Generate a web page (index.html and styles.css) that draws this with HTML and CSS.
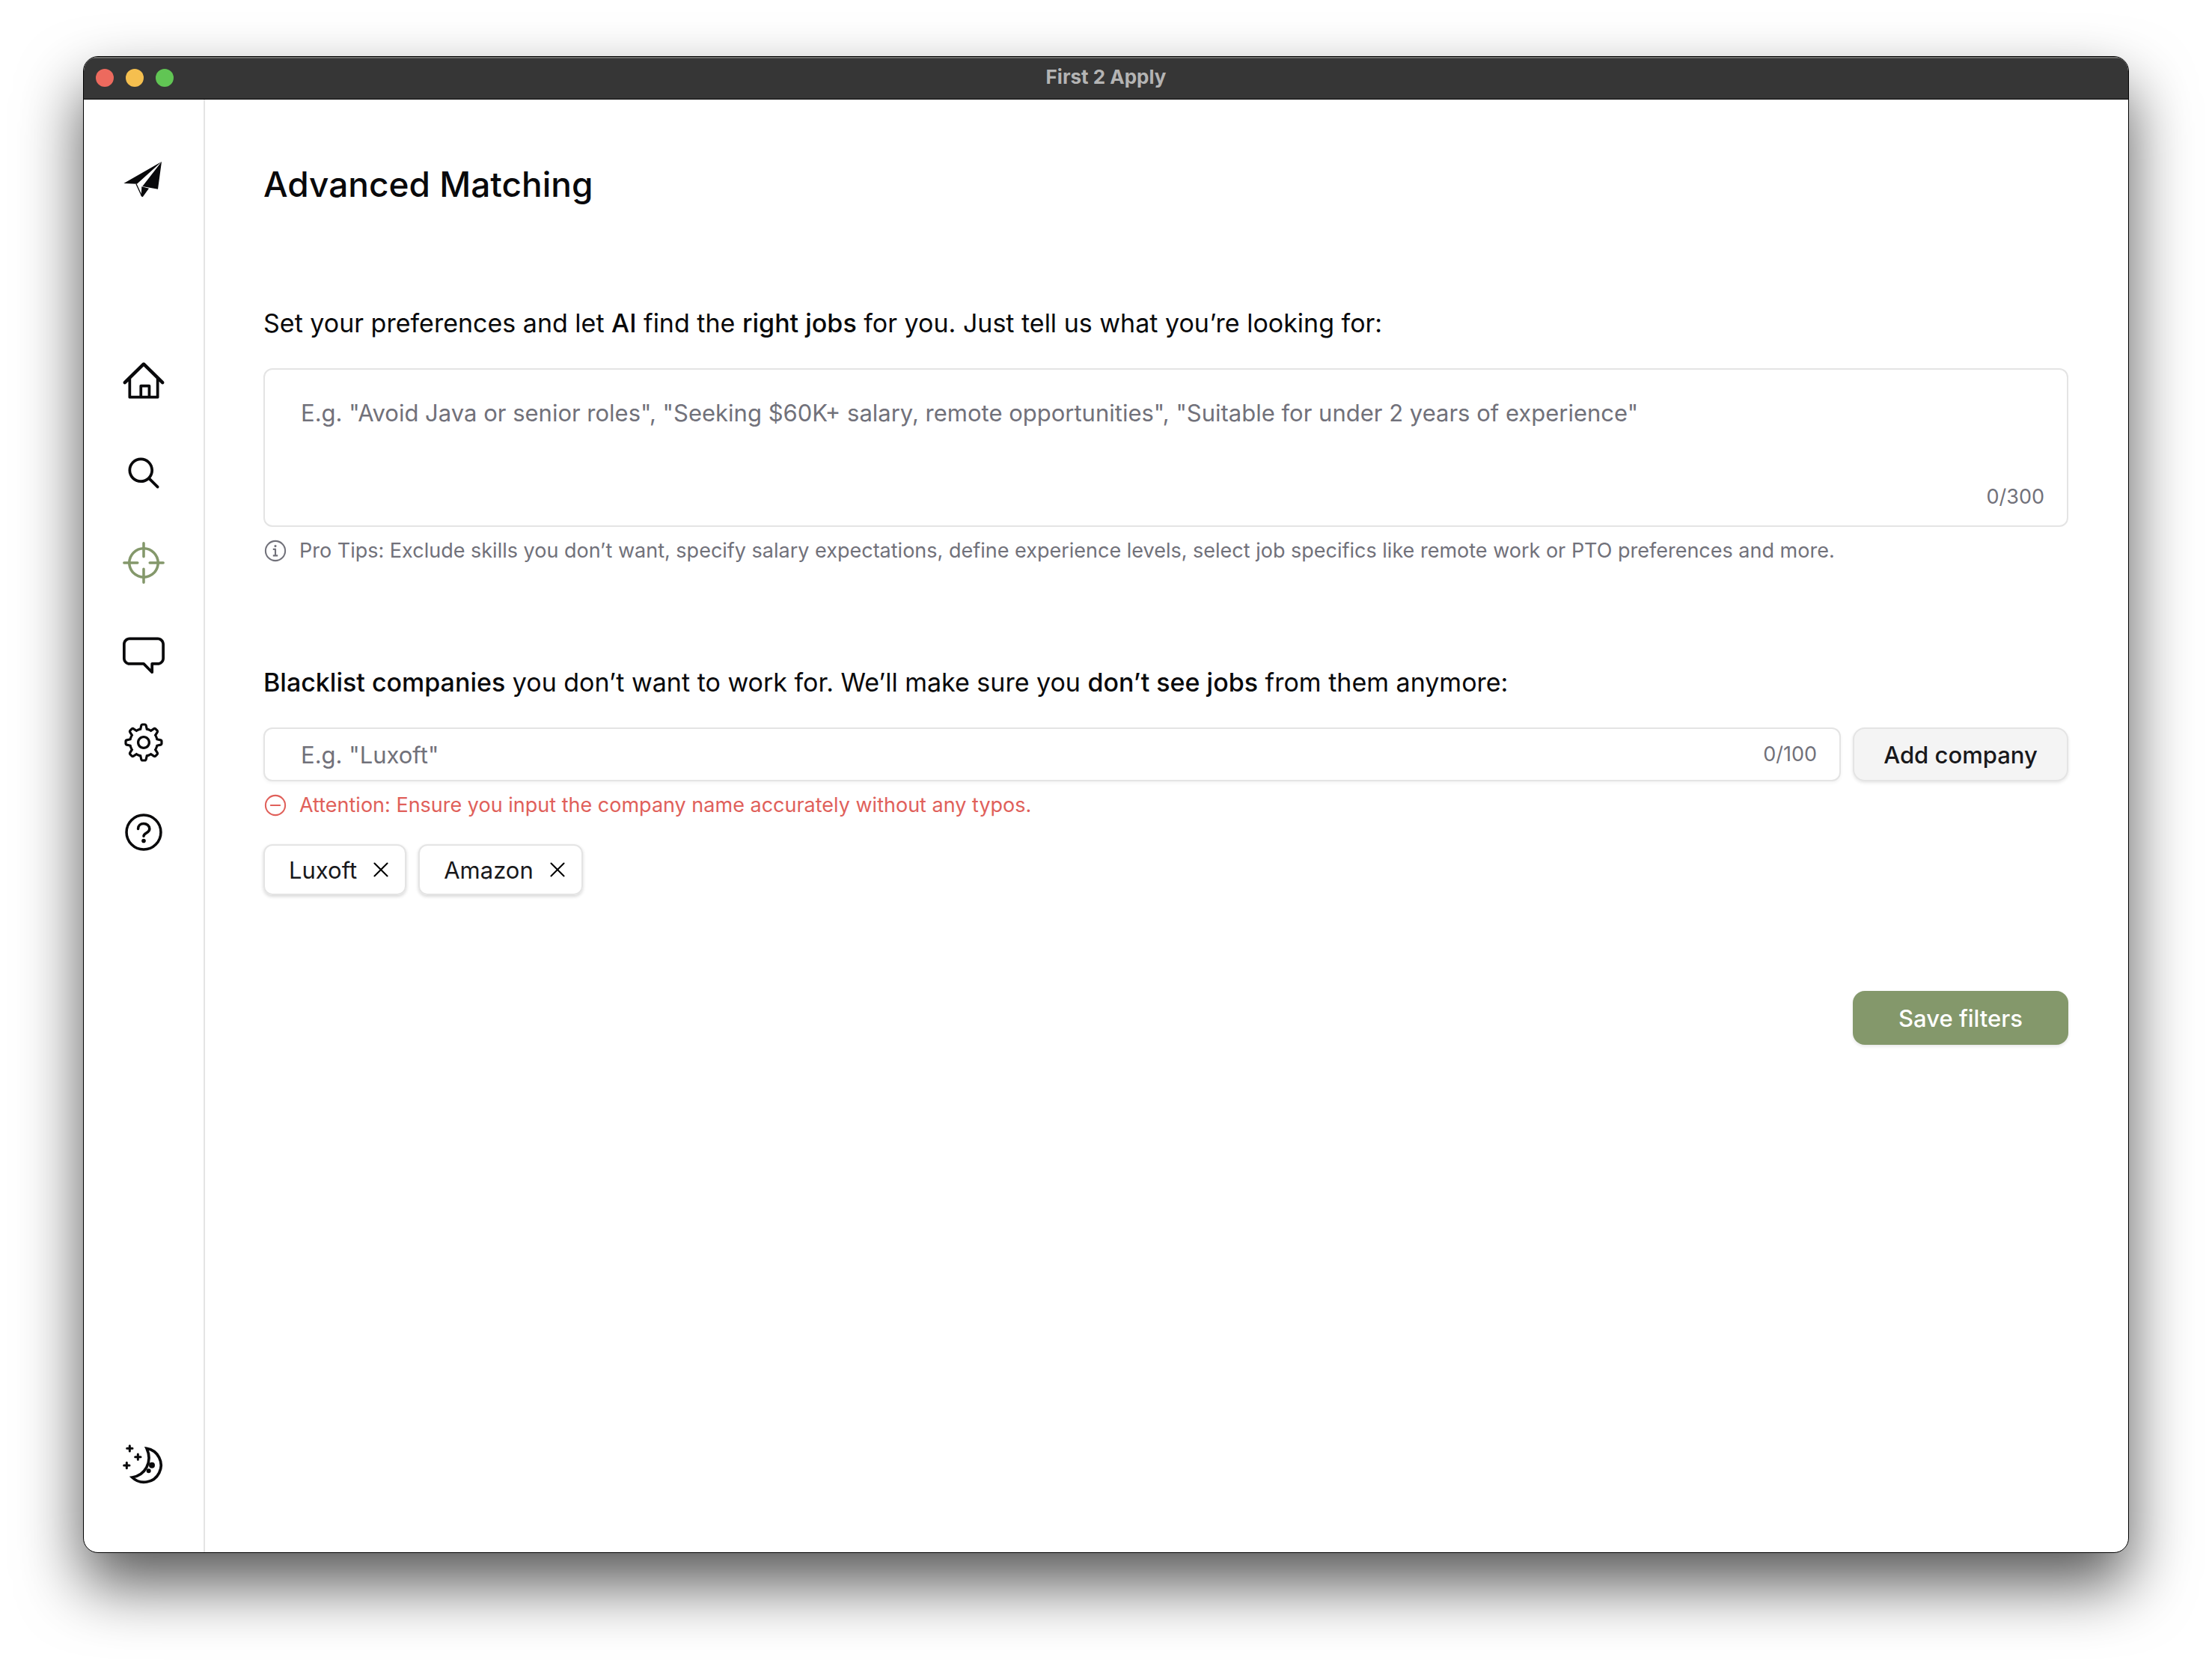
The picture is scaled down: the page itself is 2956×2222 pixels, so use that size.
FILE: index.html
```html
<!DOCTYPE html>
<html lang="en">
<head>
<meta charset="utf-8">
<meta name="viewport" content="width=device-width, initial-scale=1">
<title>First 2 Apply</title>
<link rel="stylesheet" href="styles.css">
</head>
<body>
<div class="window">
  <header class="titlebar">
    <div class="lights">
      <span class="light light-close"></span>
      <span class="light light-minimize"></span>
      <span class="light light-zoom"></span>
    </div>
    <span class="titlebar-text">First 2 Apply</span>
  </header>
  <div class="body">
    <aside class="sidebar">
      <a class="nav-link" href="#" aria-label="First 2 Apply">
        <svg class="icon" viewBox="0 0 168 168">
          <path d="M4 99 156 12 57 101Z M156 12 141 122 79 111Z M76 112 105 119 80 154 74 150Z"/>
          <path d="M54 101 77 151" fill="none" stroke="currentColor" stroke-width="4"/>
        </svg>
      </a>
      <nav class="nav">
        <a class="nav-link" href="#" aria-label="Home">
          <svg class="icon" viewBox="0 0 15 15"><path fill-rule="evenodd" d="M7.07926 0.222253C7.31275 -0.007434 7.6873 -0.007434 7.92079 0.222253L14.6708 6.86227C14.907 7.09465 14.9101 7.47453 14.6778 7.71076C14.4454 7.947 14.0655 7.95012 13.8293 7.71773L13 6.90201V12.5C13 12.7761 12.7762 13 12.5 13H2.50002C2.22388 13 2.00002 12.7761 2.00002 12.5V6.90201L1.17079 7.71773C0.934558 7.95012 0.554672 7.947 0.32229 7.71076C0.0899079 7.47453 0.0930283 7.09465 0.32926 6.86227L7.07926 0.222253ZM7.50002 1.49163L12 5.91831V12H10V8.49999C10 8.22385 9.77617 7.99999 9.50002 7.99999H6.50002C6.22388 7.99999 6.00002 8.22385 6.00002 8.49999V12H3.00002V5.91831L7.50002 1.49163ZM7 12H9V8.99999H7V12Z"/></svg>
        </a>
        <a class="nav-link" href="#" aria-label="Search">
          <svg class="icon" viewBox="0 0 15 15"><path fill-rule="evenodd" d="M10 6.5C10 8.433 8.433 10 6.5 10C4.567 10 3 8.433 3 6.5C3 4.567 4.567 3 6.5 3C8.433 3 10 4.567 10 6.5ZM9.30884 10.0159C8.53901 10.6318 7.56251 11 6.5 11C4.01472 11 2 8.98528 2 6.5C2 4.01472 4.01472 2 6.5 2C8.98528 2 11 4.01472 11 6.5C11 7.56251 10.6318 8.53901 10.0159 9.30884L12.8536 12.1464C13.0488 12.3417 13.0488 12.6583 12.8536 12.8536C12.6583 13.0488 12.3417 13.0488 12.1464 12.8536L9.30884 10.0159Z"/></svg>
        </a>
        <a class="nav-link nav-link-active" href="#" aria-label="Advanced matching" aria-current="page">
          <svg class="icon icon-line" viewBox="0 0 15 15"><circle cx="7.5" cy="7.5" r="5.15"/><path d="M7.5 .5V5.3M7.5 9.7V14.5M.5 7.5H5.3M9.7 7.5H14.5"/></svg>
        </a>
        <a class="nav-link" href="#" aria-label="Feedback">
          <svg class="icon" viewBox="0 0 15 15"><path fill-rule="evenodd" d="M12.5 3L2.5 3.00002C1.67157 3.00002 1 3.6716 1 4.50002V9.50003C1 10.3285 1.67157 11 2.5 11H7.50003C7.63264 11 7.75982 11.0527 7.85358 11.1465L10 13.2929V11.5C10 11.2239 10.2239 11 10.5 11H12.5C13.3284 11 14 10.3285 14 9.50003V4.5C14 3.67157 13.3284 3 12.5 3ZM2.49999 2.00002L12.5 2C13.8807 2 15 3.11929 15 4.5V9.50003C15 10.8807 13.8807 12 12.5 12H11V14.5C11 14.7022 10.8782 14.8845 10.6913 14.9619C10.5045 15.0393 10.2894 14.9965 10.1464 14.8536L7.29292 12H2.5C1.11929 12 0 10.8807 0 9.50003V4.50002C0 3.11931 1.11928 2.00003 2.49999 2.00002Z"/></svg>
        </a>
        <a class="nav-link" href="#" aria-label="Settings">
          <svg class="icon" viewBox="0 0 15 15"><path fill-rule="evenodd" d="M7.07095 0.650238C6.67391 0.650238 6.32977 0.925096 6.24198 1.31231L6.0039 2.36247C5.6249 2.47269 5.26335 2.62363 4.92436 2.81013L4.01335 2.23585C3.67748 2.02413 3.23978 2.07312 2.95903 2.35386L2.35294 2.95996C2.0722 3.2407 2.0232 3.6784 2.23493 4.01427L2.80942 4.92561C2.62307 5.2645 2.47227 5.62594 2.36216 6.00481L1.31209 6.24287C0.924883 6.33065 0.650024 6.6748 0.650024 7.07183V7.92897C0.650024 8.32601 0.924883 8.67015 1.31209 8.75794L2.36228 8.99603C2.47246 9.375 2.62335 9.73652 2.80979 10.0755L2.2354 10.9867C2.02367 11.3225 2.07267 11.7602 2.35341 12.041L2.95951 12.6471C3.24025 12.9278 3.67795 12.9768 4.01382 12.7651L4.92506 12.1907C5.26384 12.377 5.62516 12.5278 6.0039 12.6379L6.24198 13.6881C6.32977 14.0753 6.67391 14.3502 7.07095 14.3502H7.92809C8.32512 14.3502 8.66927 14.0753 8.75705 13.6881L8.99505 12.6383C9.37411 12.5282 9.73573 12.3773 10.0748 12.1909L10.986 12.7653C11.3218 12.977 11.7595 12.928 12.0403 12.6473L12.6464 12.0412C12.9271 11.7604 12.9761 11.3227 12.7644 10.9869L12.1902 10.076C12.3768 9.73688 12.5278 9.37515 12.638 8.99596L13.6879 8.75794C14.0751 8.67015 14.35 8.32601 14.35 7.92897V7.07183C14.35 6.6748 14.0751 6.33065 13.6879 6.24287L12.6381 6.00488C12.528 5.62578 12.3771 5.26414 12.1906 4.92507L12.7648 4.01407C12.9766 3.6782 12.9276 3.2405 12.6468 2.95975L12.0407 2.35366C11.76 2.07292 11.3223 2.02392 10.9864 2.23565L10.0755 2.80989C9.73622 2.62328 9.37437 2.47229 8.99505 2.36209L8.75705 1.31231C8.66927 0.925096 8.32512 0.650238 7.92809 0.650238H7.07095ZM4.92053 3.81251C5.44724 3.44339 6.05665 3.18424 6.71543 3.06839L7.07095 1.50024H7.92809L8.28355 3.06816C8.94267 3.18387 9.5524 3.44302 10.0794 3.81224L11.4397 2.9547L12.0458 3.56079L11.1882 4.92117C11.5573 5.44798 11.8164 6.0575 11.9321 6.71638L13.5 7.07183V7.92897L11.932 8.28444C11.8162 8.94342 11.557 9.55301 11.1878 10.0798L12.0453 11.4402L11.4392 12.0462L10.0787 11.1886C9.55192 11.5576 8.94241 11.8166 8.28355 11.9323L7.92809 13.5002H7.07095L6.71543 11.932C6.0569 11.8162 5.44772 11.5572 4.92116 11.1883L3.56055 12.046L2.95445 11.4399L3.81213 10.0794C3.4431 9.55266 3.18403 8.94326 3.06825 8.2845L1.50002 7.92897V7.07183L3.06818 6.71632C3.18388 6.05765 3.44283 5.44833 3.81171 4.92165L2.95398 3.561L3.56008 2.95491L4.92053 3.81251ZM9.02496 7.50008C9.02496 8.34226 8.34223 9.02499 7.50005 9.02499C6.65786 9.02499 5.97513 8.34226 5.97513 7.50008C5.97513 6.65789 6.65786 5.97516 7.50005 5.97516C8.34223 5.97516 9.02496 6.65789 9.02496 7.50008ZM9.92496 7.50008C9.92496 8.83932 8.83929 9.92499 7.50005 9.92499C6.1608 9.92499 5.07513 8.83932 5.07513 7.50008C5.07513 6.16084 6.1608 5.07516 7.50005 5.07516C8.83929 5.07516 9.92496 6.16084 9.92496 7.50008Z"/></svg>
        </a>
        <a class="nav-link" href="#" aria-label="Help">
          <svg class="icon icon-line" viewBox="0 0 15 15"><circle cx="7.5" cy="7.5" r="6.15"/><path d="M5.5 6.3C5.5 5.1 6.4 4.4 7.5 4.4S9.6 5.2 9.6 6.3C9.6 7.8 7.5 7.7 7.5 8.9"/><circle class="dot" cx="7.5" cy="10.6" r=".75"/></svg>
        </a>
      </nav>
      <button class="nav-link theme-toggle" type="button" aria-label="Switch theme">
        <svg class="icon" viewBox="0 0 168 168">
          <g fill="none" stroke="currentColor" stroke-width="11">
            <path d="M96 22A68 68 0 1 1 38 138C88 130 122 78 96 22Z"/>
            <path stroke-linecap="round" stroke-width="9" d="M28 11V33M17 22H39M61 45V67M50 56H72M16 79V101M5 90H27"/>
          </g>
          <circle cx="117" cy="89" r="12"/>
          <circle cx="104" cy="112" r="9"/>
        </svg>
      </button>
    </aside>
    <main class="main">
      <h1 class="title">Advanced Matching</h1>

      <section class="section">
        <label class="prompt" for="preferences">Set your preferences and let <strong>AI</strong> find the <strong>right jobs</strong> for you. Just tell us what you’re looking for:</label>
        <div class="field">
          <textarea class="control control-area" id="preferences" maxlength="300" placeholder="E.g. &quot;Avoid Java or senior roles&quot;, &quot;Seeking $60K+ salary, remote opportunities&quot;, &quot;Suitable for under 2 years of experience&quot;"></textarea>
          <span class="counter counter-bottom">0/300</span>
        </div>
        <p class="hint">
          <svg class="icon-small" viewBox="0 0 15 15"><circle cx="7.5" cy="7.5" r="6.15" fill="none" stroke="currentColor" stroke-width=".95"/><path d="M8.25 4.5C8.25 4.914 7.914 5.25 7.5 5.25C7.086 5.25 6.75 4.914 6.75 4.5C6.75 4.086 7.086 3.75 7.5 3.75C7.914 3.75 8.25 4.086 8.25 4.5ZM6 6H7.5C7.776 6 8 6.224 8 6.5V10H9V11H6V10H7V7H6V6Z"/></svg>
          <span>Pro Tips: Exclude skills you don’t want, specify salary expectations, define experience levels, select job specifics like remote work or PTO preferences and more.</span>
        </p>
      </section>

      <section class="section section-blacklist">
        <label class="prompt" for="company"><strong>Blacklist companies</strong> you don’t want to work for. We’ll make sure you <strong>don’t see jobs</strong> from them anymore:</label>
        <div class="field-row">
          <div class="field field-grow">
            <input class="control control-line" id="company" type="text" maxlength="100" placeholder="E.g. &quot;Luxoft&quot;">
            <span class="counter counter-middle">0/100</span>
          </div>
          <button class="button button-secondary" type="button">Add company</button>
        </div>
        <p class="hint hint-warning">
          <svg class="icon-small icon-line" viewBox="0 0 15 15"><circle cx="7.5" cy="7.5" r="6.15"/><path d="M4.6 7.5H10.4"/></svg>
          <span>Attention: Ensure you input the company name accurately without any typos.</span>
        </p>
        <ul class="chips">
          <li class="chip">Luxoft
            <button class="chip-remove" type="button" aria-label="Remove Luxoft"><svg class="icon-small icon-line" viewBox="0 0 15 15"><path d="M3.5 3.5 11.5 11.5M11.5 3.5 3.5 11.5"/></svg></button>
          </li>
          <li class="chip">Amazon
            <button class="chip-remove" type="button" aria-label="Remove Amazon"><svg class="icon-small icon-line" viewBox="0 0 15 15"><path d="M3.5 3.5 11.5 11.5M11.5 3.5 3.5 11.5"/></svg></button>
          </li>
        </ul>
      </section>

      <div class="actions">
        <button class="button button-primary" type="button">Save filters</button>
      </div>
    </main>
  </div>
</div>
</body>
</html>
```
FILE: styles.css
```css
:root {
  --ink: #09090b;
  --muted: #71717a;
  --line: #e4e4e4;
  --accent: #84986b;
  --warning: #e0605a;
}

* {
  box-sizing: border-box;
}

body {
  margin: 0;
  min-height: 100vh;
  display: flex;
  padding: 75px 111px 147px;
  background: #fff;
  color: var(--ink);
  font-family: Inter, "Liberation Sans", sans-serif;
  font-size: 31px;
}

button,
input,
textarea {
  font: inherit;
  color: inherit;
}

.window {
  flex: 1;
  display: flex;
  flex-direction: column;
  border: 1px solid #000;
  border-radius: 20px;
  background: #fff;
  box-shadow: 0 42px 84px rgba(0, 0, 0, 0.66);
  overflow: hidden;
}

.titlebar {
  display: grid;
  grid-template-columns: 1fr auto 1fr;
  align-items: center;
  height: 57px;
  padding: 0 16px;
  border-bottom: 1px solid #000;
  background: #363636;
  box-shadow: inset 0 2px 0 #6c6c6a;
}

.lights {
  display: flex;
  gap: 16px;
}

.light {
  width: 24px;
  height: 24px;
  border-radius: 50%;
}

.light-close {
  background: #ed6a5e;
}

.light-minimize {
  background: #f5bf4f;
}

.light-zoom {
  background: #61c554;
}

.titlebar-text {
  padding-bottom: 2px;
  color: #b4b4b4;
  font-size: 26px;
  font-weight: 700;
  line-height: 32px;
}

.body {
  flex: 1;
  display: flex;
}

.sidebar {
  flex: none;
  width: 162px;
  display: flex;
  flex-direction: column;
  align-items: center;
  padding: 79px 0 90px;
  border-right: 2px solid var(--line);
}

.nav {
  display: flex;
  flex-direction: column;
  gap: 64px;
  margin-top: 216px;
}

.nav-link {
  display: block;
  color: var(--ink);
}

.nav-link-active {
  color: var(--accent);
}

.theme-toggle {
  margin-top: auto;
  padding: 0;
  border: 0;
  background: none;
}

.icon {
  display: block;
  width: 56px;
  height: 56px;
  fill: currentColor;
}

.icon-small {
  display: block;
  flex: none;
  width: 32px;
  height: 32px;
  fill: currentColor;
}

.icon-line {
  fill: none;
  stroke: currentColor;
  stroke-width: 0.95;
  stroke-linecap: round;
}

.dot {
  fill: currentColor;
  stroke: none;
}

.main {
  flex: 1;
  min-width: 0;
  padding: 79px 80px 79px 78px;
}

.title {
  margin: 0 0 124px;
  font-size: 46px;
  font-weight: 500;
  line-height: 68px;
}

.section-blacklist {
  margin-top: 132px;
}

.prompt {
  display: block;
  margin-bottom: 32px;
  font-size: 34px;
  line-height: 56px;
}

.prompt strong {
  font-weight: 500;
}

.field {
  position: relative;
  display: flex;
}

.field-grow {
  flex: 1;
}

.field-row {
  display: flex;
  gap: 16px;
}

.control {
  width: 100%;
  margin: 0;
  border: 2px solid var(--line);
  border-radius: 12px;
  background: #fff;
  line-height: 44px;
  resize: none;
  outline: none;
}

.control::placeholder {
  color: var(--muted);
  opacity: 1;
}

.control-area {
  height: 212px;
  padding: 36px 48px;
}

.control-line {
  height: 72px;
  padding: 0 160px 0 48px;
  box-shadow: 0 2px 4px rgba(0, 0, 0, 0.05);
}

.counter {
  position: absolute;
  right: 32px;
  color: var(--muted);
  font-size: 27px;
  line-height: 40px;
}

.counter-bottom {
  bottom: 20px;
}

.counter-middle {
  top: 16px;
}

.hint {
  display: flex;
  gap: 16px;
  margin: 16px 0 0;
  color: var(--muted);
  font-size: 27px;
  line-height: 32px;
}

.hint-warning {
  color: var(--warning);
}

.button {
  width: 288px;
  height: 72px;
  border: 0;
  border-radius: 16px;
  font-weight: 500;
  box-shadow: 0 2px 4px rgba(0, 0, 0, 0.1);
}

.button-secondary {
  border: 2px solid var(--line);
  background: #f4f4f4;
  color: #18181b;
}

.button-primary {
  background: var(--accent);
  color: #fff;
}

.chips {
  display: flex;
  gap: 16px;
  margin: 36px 0 0;
  padding: 0;
  list-style: none;
}

.chip {
  display: flex;
  align-items: center;
  gap: 16px;
  height: 68px;
  padding: 0 16px 0 32px;
  border: 2px solid var(--line);
  border-radius: 12px;
  box-shadow: 0 2px 4px rgba(0, 0, 0, 0.16);
  color: #18181b;
}

.chip-remove {
  padding: 0;
  border: 0;
  background: none;
  color: #000;
}

.actions {
  display: flex;
  justify-content: flex-end;
  margin-top: 128px;
}
```
